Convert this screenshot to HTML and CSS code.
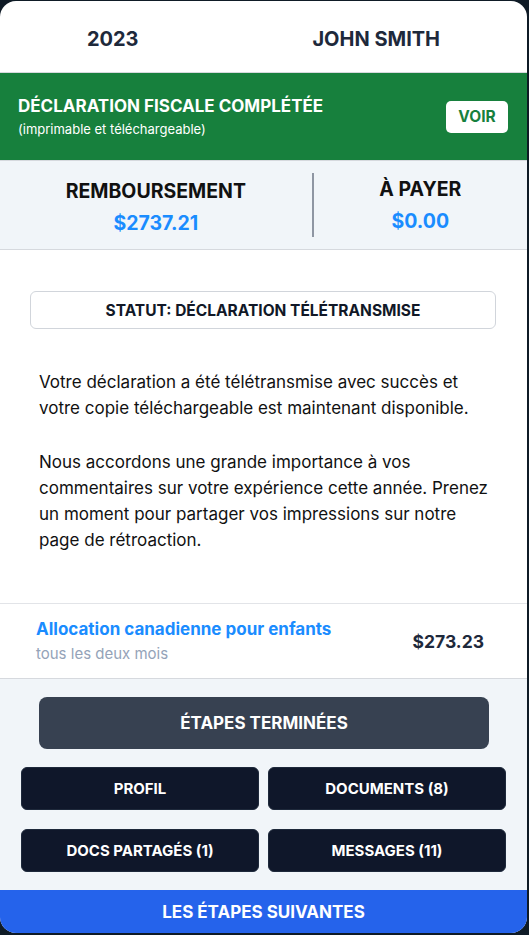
FILE: index.html
```html
<!DOCTYPE html>
<html lang="fr">
<head>
  <meta charset="UTF-8" />
  <meta name="viewport" content="width=device-width, initial-scale=1.0"/>
  <title>Déclaration 2023</title>
  <link rel="stylesheet" href="styles.css">
</head>
<body>

  <div class="card">
    <header class="top">
      <span>2023</span>
      <span>JOHN SMITH</span>
    </header>

    <section class="banner">
      <div>
        <h1>DÉCLARATION FISCALE COMPLÉTÉE</h1>
        <p>(imprimable et téléchargeable)</p>
      </div>
      <button class="voir-btn">VOIR</button>
    </section>

    <section class="summary">
      <div class="summary-item">
        <h2>REMBOURSEMENT</h2>
        <div class="amount">$2737.21</div>
      </div>
      <div class="summary-item">
        <h2>À PAYER</h2>
        <div class="amount">$0.00</div>
      </div>
    </section>

    <section class="content">
      <div class="status">STATUT: DÉCLARATION TÉLÉTRANSMISE</div>
      <p>Votre déclaration a été télétransmise avec succès et votre copie téléchargeable est maintenant disponible.</p>
      <p>Nous accordons une grande importance à vos commentaires sur votre expérience cette année. Prenez un moment pour partager vos impressions sur notre page de rétroaction.</p>
    </section>

    <section class="benefit">
      <div>
        <div class="benefit-name">Allocation canadienne pour enfants</div>
        <div class="benefit-freq">tous les deux mois</div>
      </div>
      <div class="benefit-amount">$273.23</div>
    </section>

    <section class="actions">
      <button class="btn-steps">ÉTAPES TERMINÉES</button>
      <div class="button-grid">
        <button class="btn">PROFIL</button>
        <button class="btn">DOCUMENTS (8)</button>
        <button class="btn">DOCS PARTAGÉS (1)</button>
        <button class="btn">MESSAGES (11)</button>
      </div>
    </section>

    <footer class="next">LES ÉTAPES SUIVANTES</footer>
  </div>

</body>
</html>
```

FILE: styles.css
```css
:root {
  --dark-bg: #0f1b26;
  --text-dark: #1e293b;
  --green: #17803d;
  --blue: #1a8cff;
  --light-bg: #f1f5f9;
  --line: #e2e4e8;
}

* {
  box-sizing: border-box;
}

body {
  margin: 0;
  padding: 1px 2px 2px 0;
  background: var(--dark-bg);
  font-family: Inter, "Liberation Sans", Arial, sans-serif;
}

.card {
  background: #fff;
  border-radius: 16px;
  overflow: hidden;
  height: 932px;
  display: flex;
  flex-direction: column;
}

.top {
  height: 72px;
  display: flex;
  justify-content: space-around;
  align-items: center;
  border-bottom: 1px solid #d6d9de;
  font-size: 20px;
  font-weight: 700;
  color: var(--text-dark);
  padding-top: 4px;
}

.banner {
  height: 87px;
  background: var(--green);
  color: white;
  display: flex;
  align-items: center;
  justify-content: space-between;
  padding: 0 19px 0 18px;
}

.banner h1 {
  margin: 0 0 5px;
  font-size: 17px;
  font-weight: 700;
}

.banner p {
  margin: 0;
  font-size: 13px;
}

.voir-btn {
  background: white;
  color: var(--green);
  border: none;
  border-radius: 5px;
  font-family: inherit;
  font-size: 15.5px;
  font-weight: 700;
  width: 62px;
  height: 32px;
}

.summary {
  height: 90px;
  background: var(--light-bg);
  border-top: 1px solid #d6d9de;
  border-bottom: 1px solid #d6d9de;
  display: flex;
  align-items: center;
}

.summary-item {
  flex: auto;
  text-align: center;
  padding: 4px 0 1px;
}

.summary-item + .summary-item {
  border-left: 2px solid #8f96a3;
  padding-top: 4px;
  padding-bottom: 4px;
}

.summary-item h2 {
  margin: 0 0 8px;
  font-size: 19.5px;
  font-weight: 700;
  color: #111;
}

.amount {
  font-size: 19.5px;
  font-weight: 700;
  color: var(--blue);
}

.content {
  height: 353px;
  padding: 41px 30px 0 39px;
}

.status {
  margin: 0 1px 0 -9px;
  height: 38px;
  border: 1px solid #d1d5db;
  border-radius: 6px;
  display: flex;
  align-items: center;
  justify-content: center;
  font-size: 15.5px;
  font-weight: 700;
  color: #111827;
}

.content p {
  margin: 0;
  font-size: 17px;
  line-height: 26px;
  color: #111;
}

.content .status + p {
  margin-top: 40px;
}

.content p + p {
  margin-top: 28px;
}

.benefit {
  height: 76px;
  border-top: 1px solid var(--line);
  border-bottom: 1px solid #d6d9de;
  display: flex;
  justify-content: space-between;
  align-items: center;
  padding: 0 43px 0 36px;
}

.benefit-name {
  font-size: 17px;
  font-weight: 700;
  color: var(--blue);
  margin-bottom: 5px;
}

.benefit-freq {
  font-size: 15px;
  color: #94a3b8;
}

.benefit-amount {
  font-size: 17.5px;
  font-weight: 700;
  color: var(--text-dark);
}

.actions {
  flex: 1;
  background: var(--light-bg);
  padding: 18px 21px 0;
}

.btn-steps {
  display: block;
  width: 450px;
  height: 52px;
  margin: 0 0 18px 18px;
  background: #374151;
  color: white;
  border: none;
  border-radius: 8px;
  font-family: inherit;
  font-size: 17px;
  font-weight: 700;
}

.button-grid {
  display: grid;
  grid-template-columns: 238px 238px;
  column-gap: 9px;
  row-gap: 19px;
}

.btn {
  height: 43px;
  background: #0f172a;
  color: white;
  border: 1px solid #1e293b;
  border-radius: 6px;
  font-family: inherit;
  font-size: 15px;
  font-weight: 700;
}

.next {
  height: 43px;
  background: #2563eb;
  color: white;
  display: flex;
  align-items: center;
  justify-content: center;
  font-size: 17px;
  font-weight: 700;
}
```
